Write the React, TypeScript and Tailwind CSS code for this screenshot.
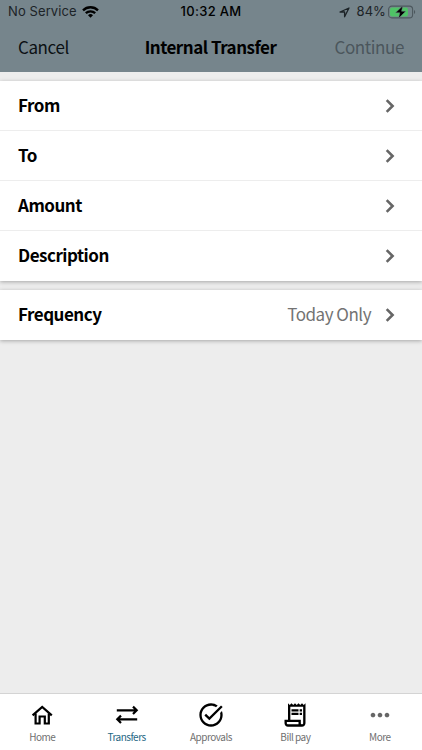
import type { ReactNode } from 'react';
import { MdMoreHoriz, MdOutlineReceiptLong, MdTaskAlt } from 'react-icons/md';

const details = ['From', 'To', 'Amount', 'Description'];

function Chevron() {
  return (
    <svg width="10" height="14" viewBox="0 0 10 14" fill="none" stroke="#666" strokeWidth="2.6">
      <path d="M1.7 1.1 7.6 7l-5.9 5.9" />
    </svg>
  );
}

function HomeIcon() {
  return (
    <svg width="24" height="24" viewBox="0 0 24 24" fill="none" stroke="currentColor" strokeWidth="2.2">
      <path d="M2.6 12.4 12.2 3.9l9.6 8.5" />
      <path d="M5.6 10.5v10h4v-7h5.2v7h4v-10" />
    </svg>
  );
}

function TransfersIcon() {
  return (
    <svg width="24" height="24" viewBox="0 0 24 24" fill="none" stroke="currentColor" strokeWidth="2.2">
      <path d="M1.8 7.3h20M18 3.6l3.7 3.7L18 11" />
      <path d="M22.2 16.3H2.2M6 12.6l-3.7 3.7L6 20" />
    </svg>
  );
}

const tabs = [
  { label: 'Home', icon: <HomeIcon /> },
  { label: 'Transfers', icon: <TransfersIcon />, active: true },
  { label: 'Approvals', icon: <MdTaskAlt size={28} /> },
  { label: 'Bill pay', icon: <MdOutlineReceiptLong size={28} /> },
  { label: 'More', icon: <MdMoreHoriz size={28} className="text-[#666]" /> },
];

function StatusBar() {
  return (
    <div className="grid h-6 grid-cols-3 items-center pl-2 pr-[6px] font-['Inter','Liberation_Sans',sans-serif] text-[13px] text-[#1c2327]">
      <div className="flex items-center gap-[5px]">
        <span className="tracking-[0.1px]">No Service</span>
        <svg width="17" height="12" viewBox="0 0 17 12" fill="none" stroke="#000" strokeWidth="2.3">
          <path d="M1 4.3a10.8 10.8 0 0 1 15 0" />
          <path d="M3.8 7.2a6.8 6.8 0 0 1 9.4 0" />
          <path d="M8.5 11.8 6 9.3a3.6 3.6 0 0 1 5 0z" fill="#000" stroke="none" />
        </svg>
      </div>
      <span className="pr-[2px] text-center font-medium tracking-[0.3px] text-black">10:32 AM</span>
      <div className="flex items-center justify-end">
        <svg width="11" height="11" viewBox="0 0 11 11" fill="none" stroke="#1c2327" strokeWidth="1.3" strokeLinejoin="round">
          <path d="M10 1 1 5h4.6v4.8z" />
        </svg>
        <span className="ml-[6px] tracking-[0.1px]">84%</span>
        <svg className="ml-[2px]" width="28" height="14" viewBox="0 0 28 14">
          <rect x="0.6" y="1.1" width="24" height="11.8" rx="3.2" fill="none" stroke="#4d585e" strokeWidth="1.1" />
          <rect x="2" y="2.5" width="18" height="9" rx="2" fill="#4fc366" />
          <path d="M26 5v4q1.2-.5 1.2-2T26 5z" fill="#4d585e" />
          <path d="M14.8.8 7.5 7.8h4.3l-1.2 5.5 7.2-7.1h-4.2z" fill="#000" stroke="#76858c" strokeWidth="0.5" />
        </svg>
      </div>
    </div>
  );
}

function Row({ label, children }: { label: string; children?: ReactNode }) {
  return (
    <div className="flex h-[50px] items-center justify-between border-b border-[#ededed] pl-[18px] pr-[27px] last:border-b-0">
      <span className="pb-[2px] text-[17px] font-bold leading-6 tracking-[-0.5px] text-black">{label}</span>
      <div className="flex items-center">
        {children}
        <Chevron />
      </div>
    </div>
  );
}

export default function App() {
  return (
    <div className="flex h-[750px] w-[422px] flex-col overflow-hidden bg-[#ededed] font-['Noto_Sans_CJK_SC',sans-serif]">
      <header className="h-[72px] shrink-0 bg-[#76858c]">
        <StatusBar />
        <div className="grid h-[46px] grid-cols-[1fr_auto_1fr] items-center px-[18px] text-[17px] tracking-[-0.4px]">
          <span className="text-[#0c1114]">Cancel</span>
          <h1 className="pr-px font-bold tracking-[-0.5px] text-black">Internal Transfer</h1>
          <span className="text-right text-[#4b565c]">Continue</span>
        </div>
      </header>

      <main className="flex flex-1 flex-col gap-[9px] pt-[9px]">
        <section className="bg-white shadow-[0_1px_4px_rgba(0,0,0,0.3)]">
          {details.map((label) => (
            <Row key={label} label={label} />
          ))}
        </section>
        <section className="bg-white shadow-[0_1px_4px_rgba(0,0,0,0.3)]">
          <Row label="Frequency">
            <span className="mr-[14px] pb-[3px] text-[17px] leading-6 tracking-[-0.5px] text-[#737373]">Today Only</span>
          </Row>
        </section>
      </main>

      <nav className="grid h-[57px] shrink-0 grid-cols-5 border-t border-[#d4d4d4] bg-white">
        {tabs.map((tab) => (
          <div key={tab.label} className="flex flex-col items-center pt-[6px]">
            <div className="flex h-[29px] items-center text-black">{tab.icon}</div>
            <span className={tab.active ? 'text-[10px] leading-4 tracking-[-0.5px] text-[#1f6784]' : 'text-[10px] leading-4 tracking-[-0.5px] text-[#707070]'}>
              {tab.label}
            </span>
          </div>
        ))}
      </nav>
    </div>
  );
}
